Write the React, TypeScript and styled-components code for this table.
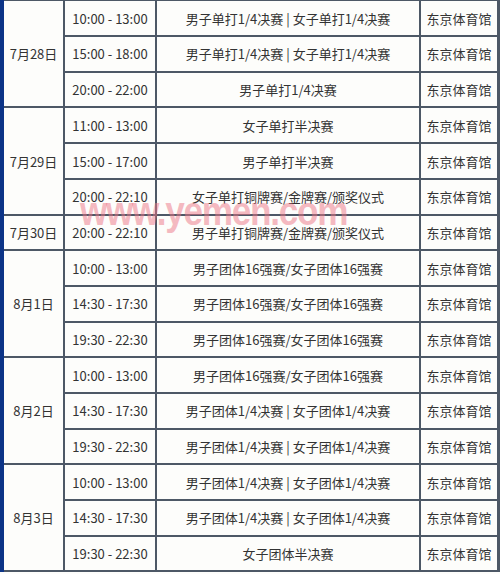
import React from 'react';
import styled, { createGlobalStyle } from 'styled-components';

const GlobalStyle = createGlobalStyle`
  html, body {
    margin: 0;
    padding: 0;
    background: #ffffff;
  }
  body {
    font-family: "Noto Sans CJK SC", "Noto Sans", sans-serif;
  }
`;

const Frame = styled.div`
  position: relative;
  width: 500px;
  height: 574px;
  overflow: hidden;
  background: #fdfdfb;
`;

const Grid = styled.div`
  display: grid;
  grid-template-columns: 59px 90px 262px 76px;
  grid-auto-rows: 33.7px;
  column-gap: 2px;
  row-gap: 2px;
  width: 496px;
  margin-top: -0.6px;
  padding-top: 2px;
  padding-bottom: 2px;
  background: #4d5866;
  border-left: 4px solid #0c3487;
  border-right: 3px solid #1a45a8;
  box-sizing: content-box;
`;

const Cell = styled.div<{ $span?: number }>`
  grid-row: span ${p => p.$span ?? 1};
  display: flex;
  align-items: center;
  justify-content: center;
  background: #fdfdfb;
  color: #333333;
  font-size: 13px;
  white-space: nowrap;
  letter-spacing: 0;
`;

const Watermark = styled.div`
  position: absolute;
  left: 80px;
  top: 188px;
  font-family: "Liberation Sans", Arial, sans-serif;
  font-weight: bold;
  font-size: 40px;
  line-height: 46px;
  letter-spacing: -1.5px;
  color: rgba(236, 118, 134, 0.5);
  transform: scaleX(0.88);
  transform-origin: left center;
  pointer-events: none;
`;

type Group = {
  date: string;
  rows: [string, string][];
};

const groups: Group[] = [
  {
    date: '7月28日',
    rows: [
      ['10:00 - 13:00', '男子单打1/4决赛 | 女子单打1/4决赛'],
      ['15:00 - 18:00', '男子单打1/4决赛 | 女子单打1/4决赛'],
      ['20:00 - 22:00', '男子单打1/4决赛'],
    ],
  },
  {
    date: '7月29日',
    rows: [
      ['11:00 - 13:00', '女子单打半决赛'],
      ['15:00 - 17:00', '男子单打半决赛'],
      ['20:00 - 22:10', '女子单打铜牌赛/金牌赛/颁奖仪式'],
    ],
  },
  {
    date: '7月30日',
    rows: [['20:00 - 22:10', '男子单打铜牌赛/金牌赛/颁奖仪式']],
  },
  {
    date: '8月1日',
    rows: [
      ['10:00 - 13:00', '男子团体16强赛/女子团体16强赛'],
      ['14:30 - 17:30', '男子团体16强赛/女子团体16强赛'],
      ['19:30 - 22:30', '男子团体16强赛/女子团体16强赛'],
    ],
  },
  {
    date: '8月2日',
    rows: [
      ['10:00 - 13:00', '男子团体16强赛/女子团体16强赛'],
      ['14:30 - 17:30', '男子团体1/4决赛 | 女子团体1/4决赛'],
      ['19:30 - 22:30', '男子团体1/4决赛 | 女子团体1/4决赛'],
    ],
  },
  {
    date: '8月3日',
    rows: [
      ['10:00 - 13:00', '男子团体1/4决赛 | 女子团体1/4决赛'],
      ['14:30 - 17:30', '男子团体1/4决赛 | 女子团体1/4决赛'],
      ['19:30 - 22:30', '女子团体半决赛'],
    ],
  },
];

const App: React.FC = () => {
  return (
    <>
      <GlobalStyle />
      <Frame>
        <Grid>
          {groups.map(g =>
            g.rows.map(([time, event], i) => (
              <React.Fragment key={g.date + i}>
                {i === 0 && <Cell $span={g.rows.length}>{g.date}</Cell>}
                <Cell>{time}</Cell>
                <Cell>{event}</Cell>
                <Cell>东京体育馆</Cell>
              </React.Fragment>
            ))
          )}
        </Grid>
        <Watermark>www.yemen.com</Watermark>
      </Frame>
    </>
  );
};

export default App;
